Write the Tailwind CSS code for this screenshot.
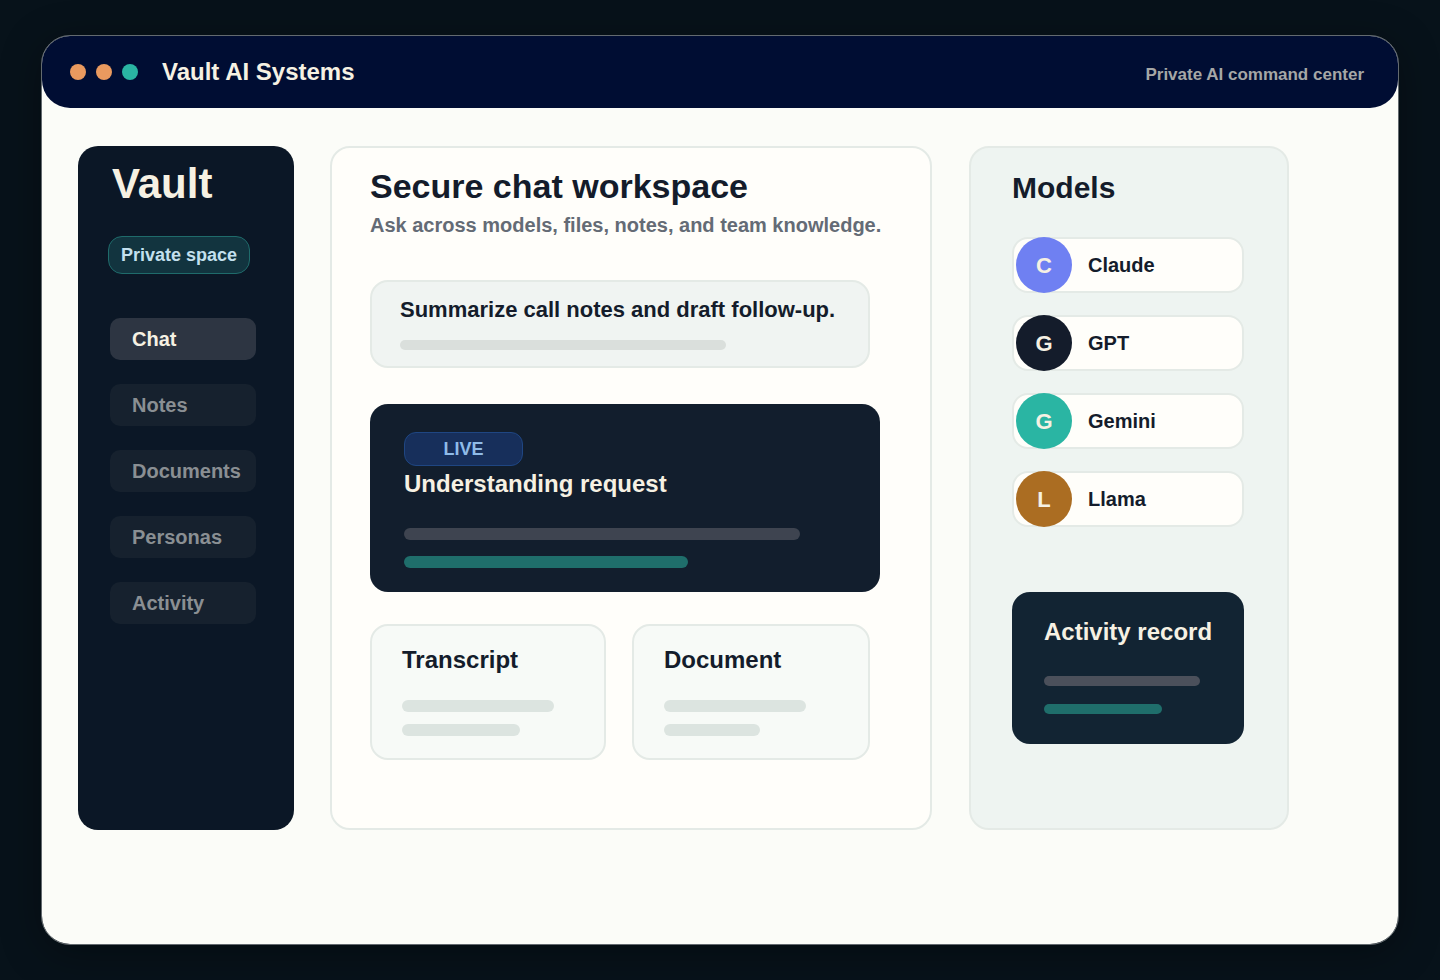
<!DOCTYPE html>
<html lang="en">
<head>
    <meta charset="UTF-8">
    <title>Vault AI Systems</title>
    <script src="https://cdn.jsdelivr.net/npm/@tailwindcss/browser@4"></script>
</head>
<body class="w-[1440px] h-[980px] overflow-hidden bg-[#07121a] pt-[36px] pl-[42px] font-['Liberation_Sans',Arial,sans-serif] font-bold">
    <!-- window -->
    <div class="w-[1356px] h-[908px] rounded-[28px] bg-[#fbfcf8] outline outline-1 outline-[#8b9296]/70 shadow-[0_8px_40px_rgba(0,0,0,0.35)]">
        <!-- title bar -->
        <header class="h-[72px] rounded-[28px] bg-[#000d33] flex items-center pl-[28px] pr-[34px]">
            <div class="flex gap-[10px]">
                <span class="w-4 h-4 rounded-full bg-[#ea9a5f]"></span>
                <span class="w-4 h-4 rounded-full bg-[#ea9a5f]"></span>
                <span class="w-4 h-4 rounded-full bg-[#2ab5a3]"></span>
            </div>
            <h1 class="ml-[24px] text-[24px] leading-none text-[#f6f1e3]">Vault AI Systems</h1>
            <span class="ml-auto mt-[6px] text-[17px] text-[#a5a7a6]">Private AI command center</span>
        </header>

        <div class="flex pt-[38px] pl-[36px]">
            <!-- sidebar -->
            <aside class="w-[216px] h-[684px] rounded-[20px] bg-[#0b1726] pl-[30px]">
                <div class="ml-[4px] mt-[13px] text-[42px] leading-[50px] text-[#f6f1e3]">Vault</div>
                <div class="mt-[27px] w-[142px] h-[38px] rounded-[14px] border border-[#1f6b6b] bg-[#12343f] flex items-center justify-center text-[18px] text-[#c3e0ee]">Private space</div>
                <nav class="ml-[2px] mt-[44px] flex flex-col gap-[24px] text-[20px]">
                    <a class="w-[146px] h-[42px] rounded-[10px] bg-[#2d3542] pl-[22px] flex items-center text-[#f6f1e3]">Chat</a>
                    <a class="w-[146px] h-[42px] rounded-[10px] bg-[#16212e] pl-[22px] flex items-center text-[#8a8f93]">Notes</a>
                    <a class="w-[146px] h-[42px] rounded-[10px] bg-[#16212e] pl-[22px] flex items-center text-[#8a8f93]">Documents</a>
                    <a class="w-[146px] h-[42px] rounded-[10px] bg-[#16212e] pl-[22px] flex items-center text-[#8a8f93]">Personas</a>
                    <a class="w-[146px] h-[42px] rounded-[10px] bg-[#16212e] pl-[22px] flex items-center text-[#8a8f93]">Activity</a>
                </nav>
            </aside>

            <!-- workspace -->
            <main class="ml-[36px] w-[602px] h-[684px] rounded-[20px] border-2 border-[#e4eae6] bg-[#fffefa] pl-[38px]">
                <h2 class="mt-[18px] text-[34px] leading-[40px] text-[#141c2b]">Secure chat workspace</h2>
                <p class="mt-[7px] text-[20px] leading-[24px] text-[#646b75]">Ask across models, files, notes, and team knowledge.</p>
                <div class="mt-[43px] w-[500px] h-[88px] rounded-[18px] border-2 border-[#e4eae6] bg-[#f0f4f2] pl-[28px] pt-[15px]">
                    <div class="text-[22px] leading-[26px] text-[#141c2b]">Summarize call notes and draft follow-up.</div>
                    <div class="mt-[17px] w-[326px] h-[10px] rounded-full bg-[#dadfdc]"></div>
                </div>
                <div class="mt-[36px] w-[510px] h-[188px] rounded-[18px] bg-[#121e2d] pl-[34px] pt-[28px]">
                    <div class="w-[119px] h-[34px] rounded-[12px] border border-[#1f4682] bg-[#172f5b] flex items-center justify-center text-[18px] text-[#8fbbe8]">LIVE</div>
                    <div class="mt-[4px] text-[24px] leading-[28px] text-[#f6f1e3]">Understanding request</div>
                    <div class="mt-[30px] w-[396px] h-[12px] rounded-full bg-[#3e4450]"></div>
                    <div class="mt-[16px] w-[284px] h-[12px] rounded-full bg-[#1f6e6b]"></div>
                </div>
                <div class="mt-[32px] flex gap-[26px]">
                    <div class="w-[236px] h-[136px] rounded-[18px] border-2 border-[#e4eae6] bg-[#f7faf7] pl-[30px] pt-[20px]">
                        <div class="text-[24px] leading-[28px] text-[#141c2b]">Transcript</div>
                        <div class="mt-[26px] w-[152px] h-[12px] rounded-full bg-[#dce4e0]"></div>
                        <div class="mt-[12px] w-[118px] h-[12px] rounded-full bg-[#dce4e0]"></div>
                    </div>
                    <div class="w-[238px] h-[136px] rounded-[18px] border-2 border-[#e4eae6] bg-[#f7faf7] pl-[30px] pt-[20px]">
                        <div class="text-[24px] leading-[28px] text-[#141c2b]">Document</div>
                        <div class="mt-[26px] w-[142px] h-[12px] rounded-full bg-[#dce4e0]"></div>
                        <div class="mt-[12px] w-[96px] h-[12px] rounded-full bg-[#dce4e0]"></div>
                    </div>
                </div>
            </main>

            <!-- models -->
            <aside class="ml-[37px] w-[320px] h-[684px] rounded-[20px] border-2 border-[#e4eae6] bg-[#eef4f1] pl-[41px]">
                <h3 class="mt-[22px] text-[30px] leading-[36px] text-[#141c2b]">Models</h3>
                <div class="mt-[31px] flex flex-col gap-[22px]">
                    <div class="w-[232px] h-[56px] rounded-[16px] border-2 border-[#e4eae6] bg-[#fffefa] flex items-center">
                        <span class="ml-[2px] w-[56px] h-[56px] shrink-0 rounded-full bg-[#6f80f2] flex items-center justify-center text-[22px] text-[#f6f1e3]">C</span>
                        <span class="ml-[16px] text-[20px] text-[#141c2b]">Claude</span>
                    </div>
                    <div class="w-[232px] h-[56px] rounded-[16px] border-2 border-[#e4eae6] bg-[#fffefa] flex items-center">
                        <span class="ml-[2px] w-[56px] h-[56px] shrink-0 rounded-full bg-[#141c2b] flex items-center justify-center text-[22px] text-[#f6f1e3]">G</span>
                        <span class="ml-[16px] text-[20px] text-[#141c2b]">GPT</span>
                    </div>
                    <div class="w-[232px] h-[56px] rounded-[16px] border-2 border-[#e4eae6] bg-[#fffefa] flex items-center">
                        <span class="ml-[2px] w-[56px] h-[56px] shrink-0 rounded-full bg-[#2ab5a3] flex items-center justify-center text-[22px] text-[#f6f1e3]">G</span>
                        <span class="ml-[16px] text-[20px] text-[#141c2b]">Gemini</span>
                    </div>
                    <div class="w-[232px] h-[56px] rounded-[16px] border-2 border-[#e4eae6] bg-[#fffefa] flex items-center">
                        <span class="ml-[2px] w-[56px] h-[56px] shrink-0 rounded-full bg-[#ab6d22] flex items-center justify-center text-[22px] text-[#f6f1e3]">L</span>
                        <span class="ml-[16px] text-[20px] text-[#141c2b]">Llama</span>
                    </div>
                </div>
                <div class="mt-[65px] w-[232px] h-[152px] rounded-[18px] bg-[#122433] pl-[32px] pt-[25px]">
                    <div class="text-[24px] leading-[30px] text-[#f6f1e3]">Activity record</div>
                    <div class="mt-[29px] w-[156px] h-[10px] rounded-full bg-[#4b505b]"></div>
                    <div class="mt-[18px] w-[118px] h-[10px] rounded-full bg-[#1f6e6b]"></div>
                </div>
            </aside>
        </div>
    </div>
</body>
</html>
